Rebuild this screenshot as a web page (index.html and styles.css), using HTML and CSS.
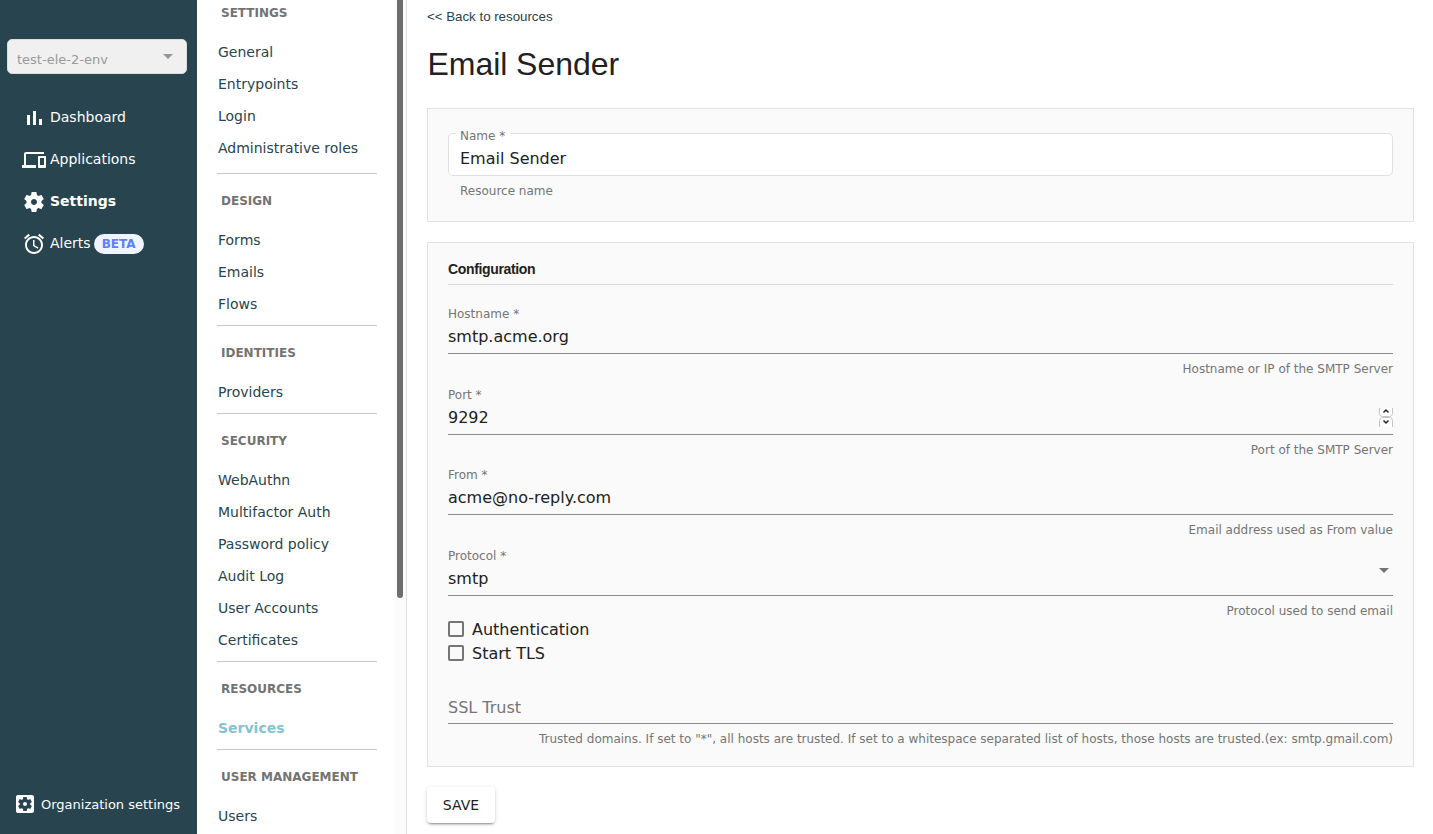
FILE: index.html
```html
<!DOCTYPE html>
<html lang="en">
<head>
<meta charset="utf-8">
<title>Email Sender</title>
<link rel="stylesheet" href="styles.css">
</head>
<body>
<div class="app">
  <aside class="sidebar">
    <div class="env-select"><span>test-ele-2-env</span><svg width="10" height="5" viewBox="0 0 10 5"><path d="M0 0h10L5 5z" fill="#949494"/></svg></div>
    <nav class="main-nav">
      <a class="main-link"><svg class="nav-icon" viewBox="0 0 24 24"><path d="M5 9h3v10H5zM11 5h3v14h-3zM17 13h3v6h-3z"/></svg>Dashboard</a>
      <a class="main-link"><svg class="nav-icon" viewBox="0 0 24 24"><path d="M4 6h18V4H4c-1.100 0-2 .900-2 2v11H0v3h14v-3H4V6zm19 2h-6c-.550 0-1 .450-1 1v10c0 .550.450 1 1 1h6c.550 0 1-.450 1-1V9c0-.550-.450-1-1-1zm-1 9h-4v-7h4v7z"/></svg>Applications</a>
      <a class="main-link active"><svg class="nav-icon" viewBox="0 0 24 24"><path d="M19.430 12.980c.040-.320.070-.640.070-.980s-.030-.660-.070-.980l2.110-1.650c.190-.150.240-.420.120-.640l-2-3.460c-.120-.220-.390-.300-.610-.220l-2.490 1c-.520-.400-1.080-.730-1.690-.980l-.380-2.650C14.460 2.180 14.250 2 14 2h-4c-.250 0-.460.180-.490.420l-.380 2.650c-.610.250-1.170.590-1.690.980l-2.490-1c-.230-.090-.490 0-.610.220l-2 3.460c-.130.220-.070.490.120.640l2.110 1.650c-.040.320-.070.650-.070.980s.030.660.070.980l-2.110 1.650c-.190.150-.240.420-.120.640l2 3.460c.120.220.390.300.610.220l2.490-1c.520.400 1.080.730 1.690.980l.380 2.650c.030.240.240.420.490.420h4c.250 0 .460-.180.490-.420l.380-2.650c.610-.250 1.170-.590 1.690-.980l2.490 1c.230.090.490 0 .610-.220l2-3.460c.120-.220.070-.490-.120-.640l-2.110-1.650zM12 15c-1.660 0-3-1.340-3-3s1.340-3 3-3 3 1.340 3 3-1.340 3-3 3z"/></svg>Settings</a>
      <a class="main-link"><svg class="nav-icon" viewBox="0 0 24 24"><path d="M22 5.720l-4.600-3.860-1.290 1.530 4.600 3.860L22 5.720zM7.880 3.390L6.600 1.860 2 5.710l1.290 1.530 4.590-3.850zM12.500 8H11v6l4.750 2.850.750-1.230-4-2.370V8zM12 4c-4.970 0-9 4.030-9 9s4.020 9 9 9c4.970 0 9-4.030 9-9s-4.030-9-9-9zm0 16c-3.870 0-7-3.130-7-7s3.130-7 7-7 7 3.130 7 7-3.130 7-7 7z"/></svg>Alerts<span class="beta">BETA</span></a>
    </nav>
    <a class="org-link"><svg class="nav-icon" viewBox="0 0 24 24"><path d="M12 10c-1.100 0-2 .900-2 2s.900 2 2 2 2-.900 2-2-.900-2-2-2zm7-7H5c-1.110 0-2 .900-2 2v14c0 1.100.890 2 2 2h14c1.110 0 2-.900 2-2V5c0-1.100-.890-2-2-2zm-1.750 9c0 .230-.020.460-.050.680l1.480 1.160c.130.110.170.300.080.450l-1.400 2.420c-.090.150-.270.210-.430.150l-1.740-.700c-.360.280-.760.510-1.180.690l-.260 1.850c-.030.170-.180.300-.350.300h-2.800c-.170 0-.320-.130-.350-.290l-.260-1.850c-.430-.180-.820-.410-1.180-.690l-1.740.700c-.160.060-.340 0-.430-.150l-1.400-2.420c-.090-.150-.050-.340.080-.450l1.480-1.160c-.030-.230-.050-.460-.050-.690s.020-.460.050-.680l-1.480-1.160c-.130-.110-.170-.300-.080-.450l1.400-2.420c.090-.150.270-.210.430-.150l1.740.700c.360-.280.760-.510 1.180-.690l.260-1.850c.030-.170.180-.300.350-.300h2.800c.170 0 .320.130.350.290l.260 1.850c.430.180.820.410 1.180.690l1.740-.700c.160-.060.340 0 .430.150l1.400 2.420c.090.150.050.340-.080.450l-1.480 1.160c.030.230.050.460.050.690z"/></svg>Organization settings</a>
  </aside>

  <div class="submenu">
    <nav class="submenu-list">
      <section class="group first"><h2>SETTINGS</h2><a>General</a><a>Entrypoints</a><a>Login</a><a>Administrative roles</a></section>
      <section class="group"><h2>DESIGN</h2><a>Forms</a><a>Emails</a><a>Flows</a></section>
      <section class="group"><h2>IDENTITIES</h2><a>Providers</a></section>
      <section class="group"><h2>SECURITY</h2><a>WebAuthn</a><a>Multifactor Auth</a><a>Password policy</a><a>Audit Log</a><a>User Accounts</a><a>Certificates</a></section>
      <section class="group"><h2>RESOURCES</h2><a class="active">Services</a></section>
      <section class="group"><h2>USER MANAGEMENT</h2><a>Users</a></section>
    </nav>
    <div class="track"><div class="thumb"></div></div>
  </div>

  <main class="content">
    <a class="back">&lt;&lt; Back to resources</a>
    <h1>Email Sender</h1>

    <section class="card name-card">
      <div class="outlined"><span class="outlined-label">Name *</span>Email Sender</div>
      <div class="outlined-hint">Resource name</div>
    </section>

    <section class="card config">
      <h3>Configuration</h3>
      <div class="field"><label>Hostname *</label><div class="value">smtp.acme.org</div><div class="hint">Hostname or IP of the SMTP Server</div></div>
      <div class="field port"><label>Port *</label><div class="value">9292
        <svg class="spinner" width="14" height="19" viewBox="0 0 14 19"><rect width="14" height="19" fill="#fff"/><path d="M.5 0v5.500q0 3 3 3h7q3 0 3-3V0M.5 19v-6.500q0-3 3-3h7q3 0 3 3V19" fill="none" stroke="#c4c4c4"/><path d="M4.500 4.500L7 2 9.500 4.500M4.500 12.500L7 15 9.500 12.500" fill="none" stroke="#222" stroke-width="1.500"/></svg></div><div class="hint">Port of the SMTP Server</div></div>
      <div class="field"><label>From *</label><div class="value">acme@no-reply.com</div><div class="hint">Email address used as From value</div></div>
      <div class="field protocol"><label>Protocol *</label><div class="value">smtp<svg class="arrow" width="10" height="5" viewBox="0 0 10 5"><path d="M0 0h10L5 5z" fill="#757575"/></svg></div><div class="hint">Protocol used to send email</div></div>
      <div class="check"><span class="box"></span>Authentication</div>
      <div class="check"><span class="box"></span>Start TLS</div>
      <div class="field ssl"><div class="value empty">SSL Trust</div><div class="hint">Trusted domains. If set to "*", all hosts are trusted. If set to a whitespace separated list of hosts, those hosts are trusted.(ex: smtp.gmail.com)</div></div>
    </section>
    <button class="save">SAVE</button>
  </main>
</div>
</body>
</html>
```
FILE: styles.css
```css
* { box-sizing: border-box; }
body { margin: 0; font-family: "DejaVu Sans", sans-serif; color: #212121; background: #fff; }
h1, h2, h3 { margin: 0; }
svg { display: block; flex: none; }
.app { display: flex; height: 834px; overflow: hidden; }

.sidebar { width: 197px; flex: none; background: #28444f; color: #fff; display: flex; flex-direction: column; padding: 39px 10px 18px 7px; }
.env-select { height: 35px; flex: none; background: #f0f0f0; border: 1px solid #ddd; border-radius: 5px; display: flex; align-items: center; justify-content: space-between; padding: 0 13px 0 9px; font-size: 13px; color: #999; }
.env-select span { padding-top: 5px; }
.main-nav { padding: 22px 0 0 15px; }
.main-link { display: flex; align-items: center; height: 42px; font-size: 14px; gap: 4px; }
.main-link.active { font-weight: bold; }
.nav-icon { width: 24px; height: 24px; fill: #fff; }
.main-link .nav-icon { margin-top: 1px; }
.beta { width: 50px; height: 20px; line-height: 20px; margin: 2px 0 0 -1px; border-radius: 10px; background: #f0f4ff; color: #5c7fff; font-size: 12px; font-weight: bold; text-align: center; }
.org-link { margin-top: auto; display: flex; align-items: center; gap: 4px; padding-left: 6px; font-size: 13px; white-space: nowrap; }

.submenu { width: 210px; flex: none; display: flex; border-right: 1px solid #e0e0e0; }
.submenu-list { width: 180px; margin-right: 17px; padding-left: 20px; }
.group { border-top: 1px solid #c8c8c8; padding-bottom: 5px; }
.group.first { border: 0; margin-top: -14px; padding-bottom: 9px; }
.group h2 { font-size: 12px; line-height: 16px; color: #737373; padding: 19px 0 15px 4px; white-space: nowrap; }
.group a { display: block; height: 32px; line-height: 32px; padding-left: 1px; font-size: 14px; color: #28444f; }
.group a.active { font-weight: bold; color: #86c3d0; }
.track { flex: 1; padding-left: 3px; background: #fcfcfc; }
.thumb { width: 6px; height: 598px; border-radius: 0 0 3px 3px; background: #6e6e6e; }

.content { flex: 1; padding: 9px 19px 0 20px; }
.back { display: block; font: 13.333px/16px "Liberation Sans", sans-serif; letter-spacing: -.02px; color: #28444f; }
h1 { font: 400 32px/40px "Liberation Sans", sans-serif; letter-spacing: -.05px; padding-left: .5px; margin: 19px 0 24px; }
.card { background: #fafafa; border: 1px solid #e2e2e2; padding: 0 20px; }
.name-card { height: 114px; padding-top: 24px; margin-bottom: 20px; }
.outlined { position: relative; height: 43px; border: 1px solid #e0e0e0; border-radius: 5px; background: #fff; padding: 0 11px; font-size: 16px; line-height: 49px; }
.outlined-label { position: absolute; left: 7px; top: -6px; padding: 0 6px 0 4px; font-size: 12px; line-height: 16px; color: #757575; background: linear-gradient(#fafafa 6px, #fff 6px); }
.outlined-hint { font-size: 12px; line-height: 16px; color: #757575; padding: 7px 12px; }
.config { height: 525px; padding-top: 16px; }
h3 { font: bold 14px/20px "Liberation Sans", sans-serif; letter-spacing: -.35px; height: 26px; border-bottom: 1px solid #d8d8d8; margin-bottom: 21px; }
.field { height: 81px; color: #757575; }
.field.port { height: 80px; }
.field.protocol { height: 69px; }
.field label { display: block; font-size: 12px; line-height: 16px; }
.value { position: relative; height: 32px; border-bottom: 1px solid #8c8c8c; font-size: 16px; line-height: 29px; color: #212121; }
.value.empty { color: #757575; line-height: 31px; }
.hint { font-size: 12px; line-height: 16px; padding-top: 7px; text-align: right; white-space: nowrap; }
.spinner { position: absolute; right: 0; top: 5px; }
.arrow { position: absolute; right: 4px; top: 4px; }
.check { display: flex; align-items: center; gap: 8px; height: 24px; font-size: 16px; }
.box { width: 16px; height: 16px; border: 2px solid #757575; border-radius: 2px; }
.field.ssl { padding-top: 27px; }
.save { display: block; width: 68px; height: 36px; margin-top: 20px; border: 0; border-radius: 4px; background: #fff; font: 14px "DejaVu Sans", sans-serif; color: #212121; padding: 0; box-shadow: 0 3px 1px -2px rgba(0,0,0,.2), 0 2px 2px rgba(0,0,0,.14), 0 1px 5px rgba(0,0,0,.12); }
```
